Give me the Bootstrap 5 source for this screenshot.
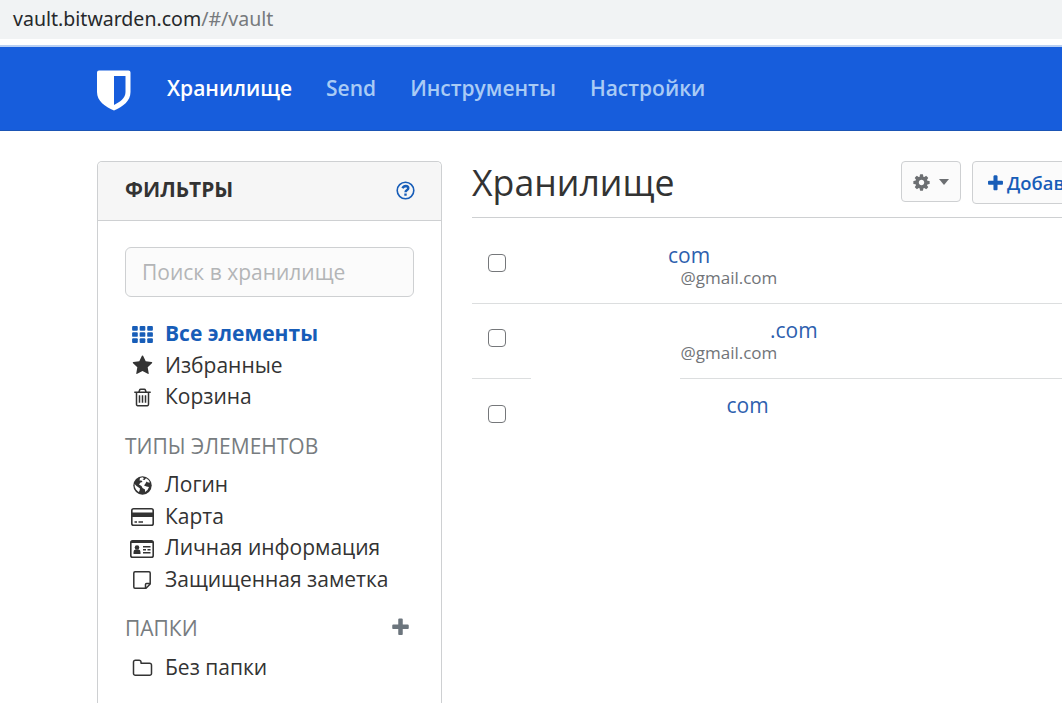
<!DOCTYPE html>
<html lang="ru">
<head>
<meta charset="utf-8">
<meta name="viewport" content="width=device-width, initial-scale=1">
<title>Хранилище</title>
<link href="https://cdn.jsdelivr.net/npm/bootstrap@5.3.0/dist/css/bootstrap.min.css" rel="stylesheet">
<style>
body{font-family:"Open Sans",sans-serif;font-size:21px;line-height:31.5px;color:#333;background:#fff;height:703px;overflow:hidden}
svg{display:block;flex:none}
.url-bar{height:39px;background:#f1f3f4;padding-left:13px;font:19.55px/37px "Noto Sans",sans-serif;color:#26282b}
.url-bar span{color:#777a7d}
.top-nav{height:86px;margin-top:6px;padding:0 0 0 97px;border-top:2px solid #b9d0f3;background:#175ddc;border-bottom:1px solid #1b55b5}
.top-nav .nav-link{padding:0 0 2px;font-weight:600;color:#a9cbf5;line-height:32px}
.top-nav .nav-link.active{color:#fff}
.vault-nav{gap:34px;margin-left:36px}
.page-area{padding:30px 0 0 97px;gap:30px}
.filter-card{width:345px;height:542px;border:1px solid #ced0d2;border-bottom:0;border-radius:5px 5px 0 0;flex:none}
.filter-card .card-header{flex:none;height:59px;padding:0 26px 2px 27px;background:#f6f6f6;border-bottom:1px solid #ced0d2;font-weight:700;font-size:20.9px}
.filter-card .card-body{padding:26px 27px 0}
.search-box{height:50px;border:1px solid #ced0d2;border-radius:6px;background:#fbfbfb;padding:0 16px;font-size:21px;color:#333}
.search-box::placeholder{color:#b3b5b7;opacity:1}
.filter-list{margin:21px 0 0}
.filter-list li{display:flex;align-items:center;height:31.6px}
.filter-list .ico{width:34px;margin-right:6px;padding-top:1px;display:flex;justify-content:center}
.filter-list .active{color:#175db8;font-weight:700}
.filter-head{color:#777c80;margin-top:18px;height:32px}
.filter-head + .filter-list{margin-top:6.4px}
.filter-head.folders{margin-top:17.4px}
.filter-head.folders + .filter-list{margin-top:7px}
.main-col{min-width:0;flex:1}
.title-bar{height:57px;border-bottom:1px solid #ced0d2}
.title-bar h1{font-size:35.65px;line-height:42px;font-weight:400;margin:0}
.tool-btn{height:41px;border:1px solid #ced0d2;border-radius:4px;background:#fbfbfb;color:#6c757d;font-size:18.4px;font-weight:600;padding:0;flex:none}
.gear-btn{width:60px;margin-left:auto;gap:7px}
.add-btn{height:43px;color:#175db8;width:150px;margin:0 -60px 0 11px;padding-left:13px;gap:2px}
.caret{border-top:6px solid #6c6f72;border-left:5.5px solid transparent;border-right:5.5px solid transparent}
.vault-row{height:75px;border-bottom:1px solid #dcdedf;padding:0 0 0 16px}
.first-row{height:86px;padding-top:11px}
.split-line{border-bottom:0;background:linear-gradient(90deg,#dcdedf 59px,transparent 59px 208px,#dcdedf 208px) bottom/100% 1px no-repeat;padding-bottom:1px}
.last-row{border-bottom:0;padding-bottom:2px}
.vault-row .form-check-input{width:18px;height:18px;border:1.6px solid #75777a;border-radius:4px;margin:0 0 6px;flex:none}
.vault-row a{color:#2d60ae;text-decoration:none;line-height:25px;display:block}
.vault-row small{font-size:17px;line-height:19px;padding-bottom:2px;color:#717478;display:block;padding-left:12.500px}
.names{margin-left:162px}
</style>
</head>
<body>
<div class="url-bar">vault.bitwarden.com<span>/#/vault</span></div>
<nav class="top-nav d-flex align-items-center">
  <svg width="34" height="41" viewBox="0 0 34 41" style="margin-top:3px"><path fill="#fff" fill-rule="evenodd" d="M2 .5H31.500Q33.500 .5 33.500 2.500V22C33.500 31 26 36.500 17 40.500C8 36.500 0 31 0 22V2.500Q0 .5 2 .5ZM17 6V35C23 32 28.500 28 28.500 22V6Z"/></svg>
  <div class="vault-nav nav flex-nowrap">
    <a class="nav-link active" href="#">Хранилище</a><a class="nav-link" href="#">Send</a><a class="nav-link" href="#">Инструменты</a><a class="nav-link" href="#">Настройки</a>
  </div>
</nav>
<div class="page-area d-flex">
  <aside class="card filter-card">
    <div class="card-header d-flex align-items-center justify-content-between"><span>ФИЛЬТРЫ</span>
      <svg width="19" height="19" viewBox="0 0 19 19" fill="none" stroke="#175db8"><circle cx="9.500" cy="9.500" r="8.300" stroke-width="1.600"/><path d="M6.500 7.300Q7.500 5 9.700 5Q12.400 5.200 12.300 7.300C12.300 9 9.500 9 9.500 11.200M9.500 12.400V14.700" stroke-width="2.400"/></svg>
    </div>
    <div class="card-body">
      <input class="form-control search-box" placeholder="Поиск в хранилище">
      <ul class="list-unstyled filter-list">
        <li class="active"><span class="ico"><svg width="21" height="17" viewBox="0 0 22 18" fill="#175db8"><g id="cells"><rect width="6" height="5" rx="1"/><rect x="8" width="6" height="5" rx="1"/><rect x="16" width="6" height="5" rx="1"/></g><use href="#cells" y="6.500"/><use href="#cells" y="13"/></svg></span>Все элементы</li>
        <li><span class="ico"><svg width="21" height="21" viewBox="0 0 1792 1792" fill="#333"><path d="M1728 647q0 22-26 48l-363 354 86 500q1 7 1 20 0 21-10.500 35.500t-30.500 14.500q-19 0-40-12l-449-236-449 236q-22 12-40 12-21 0-31.500-14.500t-10.500-35.500q0-6 2-20l86-500-364-354q-25-27-25-48 0-37 56-46l502-73 225-455q19-41 49-41t49 41l225 455 502 73q56 9 56 46z"/></svg></span>Избранные</li>
        <li><span class="ico"><svg width="21" height="21" viewBox="0 0 1792 1792" fill="#333"><path d="M704 736v576q0 14-9 23t-23 9h-64q-14 0-23-9t-9-23v-576q0-14 9-23t23-9h64q14 0 23 9t9 23zm256 0v576q0 14-9 23t-23 9h-64q-14 0-23-9t-9-23v-576q0-14 9-23t23-9h64q14 0 23 9t9 23zm256 0v576q0 14-9 23t-23 9h-64q-14 0-23-9t-9-23v-576q0-14 9-23t23-9h64q14 0 23 9t9 23zm128 724v-948h-896v948q0 22 7 40.500t14.500 27 10.500 8.500h832q3 0 10.500-8.500t14.500-27 7-40.500zm-672-1076h448l-48-117q-7-9-17-11h-317q-10 2-17 11zm928 32v64q0 14-9 23t-23 9h-96v948q0 83-47 143.500t-113 60.500h-832q-66 0-113-58.500t-47-141.500v-952h-96q-14 0-23-9t-9-23v-64q0-14 9-23t23-9h309l70-167q15-37 54-63t79-26h320q40 0 79 26t54 63l70 167h309q14 0 23 9t9 23z"/></svg></span>Корзина</li>
      </ul>
      <div class="filter-head">ТИПЫ ЭЛЕМЕНТОВ</div>
      <ul class="list-unstyled filter-list">
        <li><span class="ico"><svg width="19" height="19" viewBox="0 0 19 19"><circle cx="9.500" cy="9.500" r="9.200" fill="#333"/><path fill="#fff" d="M7 2L9.500 1.200L11 2.200L9.500 3.500L11.500 4L13 2.300L15.500 4L17 6.500L15 6.500L13.500 5.500L12.500 7.500L11 9.500L13.500 10.500L16 11L14.500 14L12 16L12 13.500L9.500 12L8.500 10L6 8.500L7.500 6.500L9.500 6L8.500 4.500L6.500 4.500ZM1.600 8L3.500 10L5 11L7 12.500L6.500 15L5.500 16L3 13.500L1.800 11Z"/></svg></span>Логин</li>
        <li><span class="ico"><svg width="23" height="18" viewBox="0 0 23 18"><rect x=".8" y=".8" width="21.400" height="16.400" rx="1.800" fill="none" stroke="#333" stroke-width="1.600"/><path fill="#333" d="M1 4.500H22V9H1ZM3.500 13.200H6V14.700H3.500ZM7.500 13.200H12V14.700H7.500Z"/></svg></span>Карта</li>
        <li><span class="ico"><svg width="24" height="18" viewBox="0 0 24 18"><rect x=".8" y=".8" width="22.400" height="16.400" rx="1.800" fill="none" stroke="#333" stroke-width="1.600"/><path fill="#333" d="M1 1H23V3H1ZM3.500 14V12Q3.500 9.500 5.500 9.500H8.500Q10.500 9.500 10.500 12V14ZM13 6H20.500V7.400H13ZM13 9H16V10.400H13ZM17.500 9H20.500V10.400H17.500ZM13 12H20.500V13.400H13Z"/><circle cx="7" cy="7.500" r="2.300" fill="#333"/></svg></span>Личная информация</li>
        <li><span class="ico"><svg width="18" height="18" viewBox="0 0 18 18" fill="none" stroke="#333" stroke-width="1.500"><path d="M2 .8H16Q17.200 .8 17.200 2V13L13 17.200H2Q.8 17.200 .8 16V2Q.8 .8 2 .8ZM17 12.500H13.500Q12.500 12.500 12.500 13.500V17"/></svg></span>Защищенная заметка</li>
      </ul>
      <div class="filter-head folders d-flex align-items-center justify-content-between"><span>ПАПКИ</span><svg width="21" height="21" viewBox="0 0 1792 1792" fill="#6c757d" style="margin:0 3px 2px 0"><path id="plus" d="M1600 736v192q0 40-28 68t-68 28h-416v416q0 40-28 68t-68 28h-192q-40 0-68-28t-28-68v-416h-416q-40 0-68-28t-28-68v-192q0-40 28-68t68-28h416v-416q0-40 28-68t68-28h192q40 0 68 28t28 68v416h416q40 0 68 28t28 68z"/></svg></div>
      <ul class="list-unstyled filter-list">
        <li><span class="ico"><svg width="21" height="21" viewBox="0 0 1792 1792" fill="#333"><path d="M1600 1312v-704q0-40-28-68t-68-28h-704q-40 0-68-28t-28-68v-64q0-40-28-68t-68-28h-320q-40 0-68 28t-28 68v960q0 40 28 68t68 28h1216q40 0 68-28t28-68zm128-704v704q0 92-66 158t-158 66h-1216q-92 0-158-66t-66-158v-960q0-92 66-158t158-66h320q92 0 158 66t66 158v32h672q92 0 158 66t66 158z"/></svg></span>Без папки</li>
      </ul>
    </div>
  </aside>
  <main class="main-col">
    <div class="title-bar d-flex align-items-start">
      <h1>Хранилище</h1>
      <button class="btn tool-btn gear-btn d-flex align-items-center justify-content-center"><svg width="19" height="19" viewBox="0 0 1792 1792" fill="#6c6f72" style="margin:2px 1px 0 -2px"><path d="M1152 896q0-106-75-181t-181-75-181 75-75 181 75 181 181 75 181-75 75-181zm512-109v222q0 12-8 23t-20 13l-185 28q-19 54-39 91 35 50 107 138 10 12 10 25t-9 23q-27 37-99 108t-94 71q-12 0-26-9l-138-108q-44 23-91 38-16 136-29 186-7 28-36 28h-222q-14 0-24.500-8.500t-11.500-21.500l-28-184q-49-16-90-37l-141 107q-10 9-25 9-14 0-25-11-126-114-165-168-7-10-7-23 0-12 8-23 15-21 51-66.500t54-70.500q-27-50-41-99l-183-27q-13-2-21-12.500t-8-23.500v-222q0-12 8-23t19-13l186-28q14-46 39-92-40-57-107-138-10-12-10-24 0-10 9-23 26-36 98.500-107.500t94.500-71.500q13 0 26 10l138 107q44-23 91-38 16-136 29-186 7-28 36-28h222q14 0 24.500 8.500t11.500 21.500l28 184q49 16 90 37l142-107q9-9 24-9 13 0 25 10 129 119 165 170 7 8 7 22 0 12-8 23-15 21-51 66.500t-54 70.500q26 50 41 98l183 28q13 2 21 12.500t8 23.500z"/></svg><span class="caret"></span></button>
      <button class="btn tool-btn add-btn d-flex align-items-center"><svg width="19" height="19" viewBox="0 0 1792 1792" fill="#175db8" style="margin-top:2px"><use href="#plus"/></svg>Добавить</button>
    </div>
    <div class="vault-row first-row d-flex align-items-center"><input class="form-check-input" type="checkbox"><div class="names"><a href="#">com</a><small>@gmail.com</small></div></div>
    <div class="vault-row split-line d-flex align-items-center"><input class="form-check-input" type="checkbox"><div class="names"><a href="#" style="padding-left:102px">.com</a><small>@gmail.com</small></div></div>
    <div class="vault-row last-row d-flex align-items-center"><input class="form-check-input" type="checkbox" style="margin-bottom:3px"><div class="names"><a href="#" style="padding-left:58.500px">com</a><small>&nbsp;</small></div></div>
  </main>
</div>
<script src="https://cdn.jsdelivr.net/npm/bootstrap@5.3.0/dist/js/bootstrap.bundle.min.js"></script>
</body>
</html>
